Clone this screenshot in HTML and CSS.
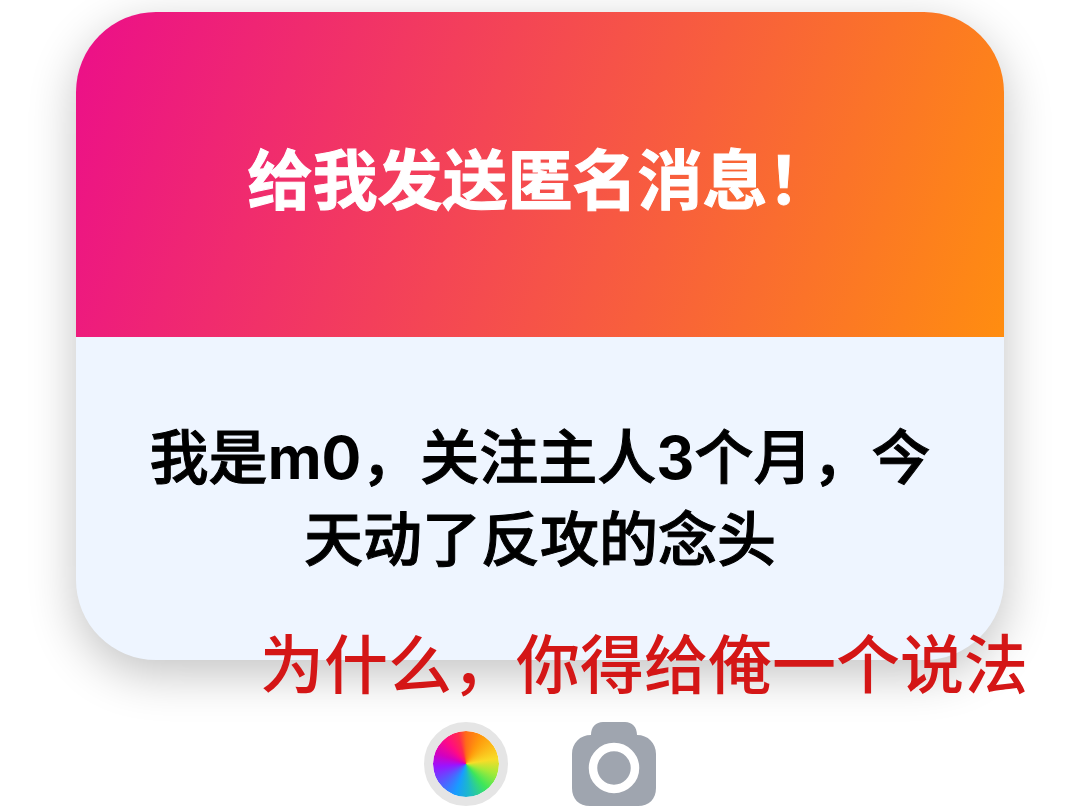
FILE: index.html
```html
<!DOCTYPE html>
<html lang="zh-CN">
<head>
<meta charset="utf-8">
<meta name="viewport" content="width=device-width, initial-scale=1">
<title>给我发送匿名消息！</title>
<link rel="stylesheet" href="styles.css">
</head>
<body>
<main class="page">
  <article class="card">
    <header class="card-header">
      <h1 class="card-title">给我发送匿名消息！</h1>
    </header>
    <div class="card-body">
      <p class="message">我是<span class="latin">m0</span>，关注主人<span class="latin">3</span>个月，今天动了反攻的念头</p>
    </div>
    <p class="reply">为什么，你得给俺一个说法</p>
  </article>
  <div class="tools">
    <button class="tool color-wheel" type="button" aria-label="颜色"></button>
    <button class="tool" type="button" aria-label="相机">
      <svg class="camera" viewBox="0 0 84 84" aria-hidden="true">
        <path fill="#9fa5af" d="M31 0H53C60 0 65 5 65 13C76 13 84 21 84 32V66C84 77 77 84 66 84H18C7 84 0 77 0 66V32C0 21 8 13 19 13C19 5 24 0 31 0Z"/>
        <circle cx="42" cy="46" r="21" fill="none" stroke="#fff" stroke-width="8.5"/>
      </svg>
    </button>
  </div>
</main>
</body>
</html>
```
FILE: styles.css
```css
* {
  box-sizing: border-box;
}

body {
  margin: 0;
  background: #fff;
  font-family: "Noto Sans CJK SC", sans-serif;
}

.page {
  padding: 12px 76px 0;
}

.card {
  position: relative;
  border-radius: 80px;
  background: #eef5ff;
  box-shadow: 0 14px 48px rgba(0, 0, 0, 0.24);
  text-align: center;
}

.card-header {
  padding: 122px 64px 118px;
  border-radius: 80px 80px 0 0;
  background: linear-gradient(108deg, #ec1187 2%, #ff8d10);
}

.card-title {
  margin: 0;
  color: #fff;
  font-size: 65px;
  font-weight: 700;
  line-height: 85px;
  -webkit-text-stroke: 1px #fff;
}

.card-body {
  padding: 76px 64px 83px;
}

.message {
  margin: 0;
  color: #000;
  font-size: 59px;
  font-weight: 500;
  line-height: 82px;
  -webkit-text-stroke: 1px #000;
}

.latin {
  font-family: Inter, sans-serif;
  font-weight: 700;
  line-height: 1;
  -webkit-text-stroke: 0;
}

.reply {
  position: absolute;
  right: -24px;
  bottom: -42px;
  margin: 0;
  color: #d41616;
  font-size: 64px;
  font-weight: 500;
  line-height: 84px;
  white-space: nowrap;
}

.tools {
  display: flex;
  justify-content: center;
  gap: 64px;
  padding-top: 62px;
}

.tool {
  width: 84px;
  height: 84px;
  padding: 0;
  border: 0;
  background: none;
}

.color-wheel {
  border: 9px solid #e5e5e5;
  border-radius: 50%;
  background: conic-gradient(#ff6b18, #ff9a0c 30deg, #f8dc28 80deg, #a5ea38 108deg, #3ee65a 140deg, #1cb8cc 175deg, #189cff 200deg, #5a55ff 235deg, #9a14ff 265deg, #d200c0 290deg, #ff0a85 320deg, #ff2a50 345deg, #ff6b18) padding-box;
}

.camera {
  display: block;
  width: 100%;
}
```
